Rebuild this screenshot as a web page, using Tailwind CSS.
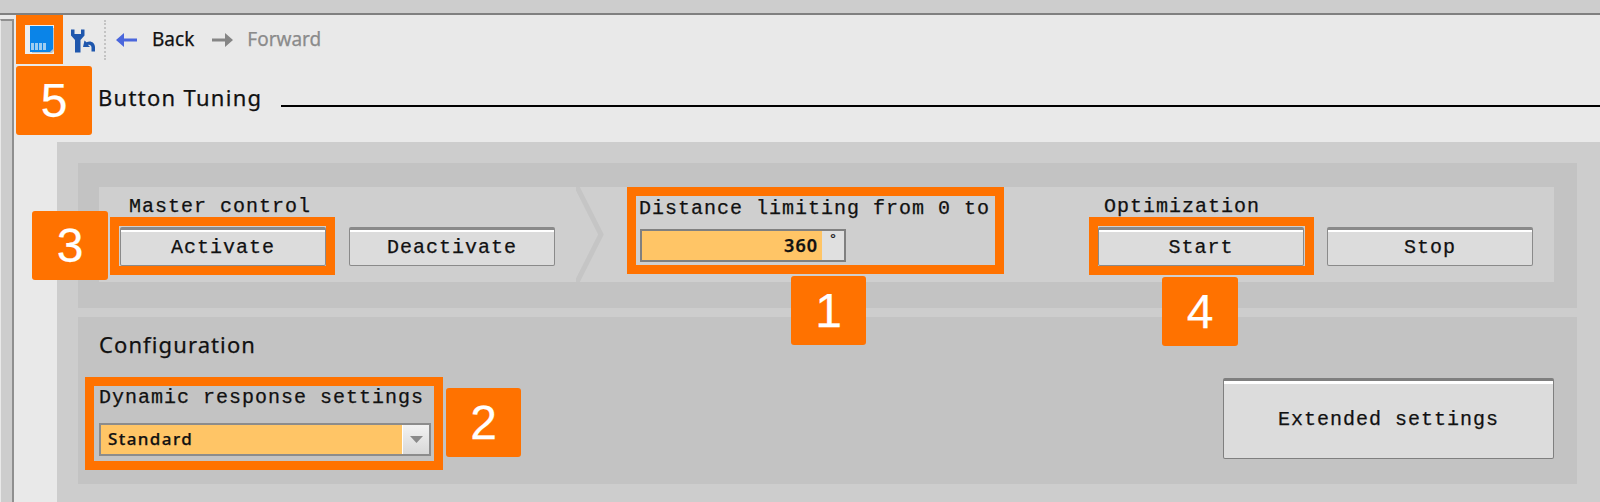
<!DOCTYPE html>
<html><head><meta charset="utf-8"><script src="https://cdn.jsdelivr.net/npm/@tailwindcss/browser@4"></script></head>
<body class="m-0">
<div class="relative w-[1600px] h-[502px] overflow-hidden bg-[#e9e9e9] flex flex-col font-['Liberation_Mono',monospace] text-[20px] tracking-[1px] text-[#111] [-webkit-text-stroke:0.25px_currentColor]">
  <div class="h-[15px] shrink-0 bg-[#cdcdcd] border-b-2 border-[#808080]"></div>
  <div class="flex-1 flex min-h-0">
    <div class="w-[14px] shrink-0 mt-[4px] bg-[#cdcdcd] border-t-2 border-r-2 border-[#8f8f8f] border-l border-l-[#e9e9e9]"></div>
    <div class="flex-1 min-w-0 flex flex-col">
      <!-- toolbar -->
      <div class="h-[49px] shrink-0 flex items-center pl-[2px] font-['Noto_Sans',sans-serif] text-[19px] tracking-normal">
        <div class="w-[47px] h-[49px] shrink-0 bg-[#ff7200] flex items-center justify-center">
          <div class="w-[29px] h-[29px] bg-[#eeeeee] flex items-center justify-center">
            <svg width="29" height="29" viewBox="0 0 29 29">
              <path d="M7 3h22v23l-2 2H7z" fill="#c4c4c4"/>
              <path d="M5 1h23v23l-3 3H5z" fill="#0a84e8"/>
              <path d="M6 18h3v7H6zM10 18h3v7h-3zM14 18h3v7h-3zM18 18h3v7h-3z" fill="#9fcdf0"/>
            </svg>
          </div>
        </div>
        <svg class="ml-[7px] shrink-0" width="26" height="28" viewBox="0 0 26 28">
          <path d="M1 3.500v6l4 4.500V26.500h5.500V14l4-4.500v-6l-3.500 0v4.500H4.500V3.500z" fill="#1f57ad"/>
          <path d="M14.500 14.500l-1.500 6.500h7l-2-2c1.600-.8 3.300.2 3.500 2.500v4h3.500v-4.500c-.2-4.500-4.500-6.800-8.500-4.700z" fill="#1f57ad"/>
        </svg>
        <div class="ml-[8px] h-[40px] border-l-2 border-dotted border-[#c4c4c4]"></div>
        <svg class="ml-[9px] shrink-0" width="23" height="16" viewBox="0 0 23 16"><path d="M22 6.500H9V1L1 8l8 7V9.500h13z" fill="#4a66dc"/></svg>
        <span class="ml-[14px] text-[#111]">Back</span>
        <svg class="ml-[17px] shrink-0" width="23" height="16" viewBox="0 0 23 16"><path d="M1 6.500h13V1l8 7-8 7V9.500H1z" fill="#858585"/></svg>
        <span class="ml-[13px] text-[#8b8b8b]">Forward</span>
      </div>
      <!-- heading -->
      <div class="h-[78px] shrink-0 relative font-['Noto_Sans',sans-serif] text-[22px] tracking-[1.3px] text-[#111]">
        <div class="flex items-end h-[46px] pl-[84px]">
          <span class="leading-[30px] -mb-[2px]">Button Tuning</span>
          <div class="ml-[19px] mb-[3px] flex-1 h-[2px] bg-black"></div>
        </div>
      </div>
      <!-- outer panel -->
      <div class="flex-1 min-h-0 ml-[43px] bg-[#cdcdcd] pt-[21px] pl-[21px] pr-[23px] flex flex-col gap-[9px]">
        <section class="h-[145px] shrink-0 bg-[#c3c3c3] pt-[24px] pl-[21px] pr-[23px]">
          <div class="relative h-[95px] bg-[#cfcfcf] flex">
            <div class="w-[477px] shrink-0 pl-[21px] pt-[8px]">
              <div class="pl-[9px] leading-[24px]">Master control</div>
              <div class="flex gap-[23px] mt-[8px]">
                <button class="w-[206px] h-[39px] bg-[#dcdcdc] border border-[#8a8a8a] border-t-[3px] rounded-[2px] shadow-[inset_0_2px_0_#ffffff] tracking-[1px]">Activate</button>
                <button class="w-[206px] h-[39px] bg-[#dcdcdc] border border-[#8a8a8a] border-t-[3px] rounded-[2px] shadow-[inset_0_2px_0_#ffffff] tracking-[1px]">Deactivate</button>
              </div>
            </div>
            <svg class="shrink-0" width="30" height="95" viewBox="0 0 30 95"><path d="M0 -2L25 47.500L0 97" fill="none" stroke="#c5c5c5" stroke-width="5"/></svg>
            <div class="w-[473px] shrink-0 pl-[33px] pt-[10px]">
              <div class="leading-[24px] whitespace-nowrap">Distance limiting from 0 to</div>
              <div class="mt-[8px] ml-[1px] w-[206px] h-[33px] border-2 border-[#808080] flex">
                <div class="w-[180px] bg-[#ffc566] text-right pr-[4px] font-['Noto_Sans',sans-serif] font-semibold text-[18px] tracking-[1px] leading-[29px]">360</div>
                <div class="flex-1 bg-[#e0e0e0] text-center text-[15px] leading-[20px] tracking-normal">°</div>
              </div>
            </div>
            <div class="flex-1 min-w-0 pl-[19px] pt-[8px]">
              <div class="pl-[6px] leading-[24px]">Optimization</div>
              <div class="flex gap-[23px] mt-[8px]">
                <button class="w-[206px] h-[39px] bg-[#dcdcdc] border border-[#8a8a8a] border-t-[3px] rounded-[2px] shadow-[inset_0_2px_0_#ffffff] tracking-[1px]">Start</button>
                <button class="w-[206px] h-[39px] bg-[#dcdcdc] border border-[#8a8a8a] border-t-[3px] rounded-[2px] shadow-[inset_0_2px_0_#ffffff] tracking-[1px]">Stop</button>
              </div>
            </div>
          </div>
        </section>
        <section class="h-[167px] shrink-0 bg-[#c3c3c3] flex items-start justify-between pl-[21px] pr-[23px]">
          <div>
            <div class="font-['Noto_Sans',sans-serif] text-[22px] tracking-[1.1px] leading-[30px] mt-[12px]">Configuration</div>
            <div class="leading-[24px] mt-[27px] whitespace-nowrap">Dynamic response settings</div>
            <div class="mt-[13px] w-[332px] h-[33px] border-2 border-[#8c8c8c] flex">
              <div class="flex-1 bg-[#ffc566] pl-[7px] font-['Noto_Sans',sans-serif] font-medium text-[17px] tracking-[1.4px] leading-[28px]">Standard</div>
              <div class="w-[27px] bg-gradient-to-b from-[#f2f2f2] to-[#d8d8d8] border-l border-white flex items-center justify-center">
                <svg width="13" height="8" viewBox="0 0 13 8"><path d="M0 0h13L6.500 7z" fill="#8a8a8a"/></svg>
              </div>
            </div>
          </div>
          <button class="mt-[61px] w-[331px] h-[81px] bg-[#dcdcdc] border border-[#7f7f7f] border-t-[3px] rounded-[2px] shadow-[inset_0_3px_0_#ffffff] tracking-[1px]">Extended settings</button>
        </section>
      </div>
    </div>
  </div>
  <!-- annotations -->
  <div class="absolute left-[627px] top-[187px] w-[377px] h-[87px] border-[9px] border-[#ff7200]"></div>
  <div class="absolute left-[110px] top-[217px] w-[225px] h-[58px] border-[9px] border-[#ff7200]"></div>
  <div class="absolute left-[1089px] top-[217px] w-[225px] h-[58px] border-[9px] border-[#ff7200]"></div>
  <div class="absolute left-[85px] top-[377px] w-[358px] h-[93px] border-[9px] border-[#ff7200]"></div>
  <div class="absolute left-[791px] top-[276px] w-[75px] h-[69px] rounded-[3px] bg-[#ff7200] text-white font-['Liberation_Sans',sans-serif] text-[48px] tracking-normal leading-[69px] text-center">1</div>
  <div class="absolute left-[446px] top-[388px] w-[75px] h-[69px] rounded-[3px] bg-[#ff7200] text-white font-['Liberation_Sans',sans-serif] text-[48px] tracking-normal leading-[69px] text-center">2</div>
  <div class="absolute left-[32px] top-[211px] w-[76px] h-[69px] rounded-[3px] bg-[#ff7200] text-white font-['Liberation_Sans',sans-serif] text-[48px] tracking-normal leading-[69px] text-center">3</div>
  <div class="absolute left-[1162px] top-[277px] w-[76px] h-[69px] rounded-[3px] bg-[#ff7200] text-white font-['Liberation_Sans',sans-serif] text-[48px] tracking-normal leading-[69px] text-center">4</div>
  <div class="absolute left-[16px] top-[66px] w-[76px] h-[69px] rounded-[3px] bg-[#ff7200] text-white font-['Liberation_Sans',sans-serif] text-[48px] tracking-normal leading-[69px] text-center">5</div>
</div>
</body></html>
